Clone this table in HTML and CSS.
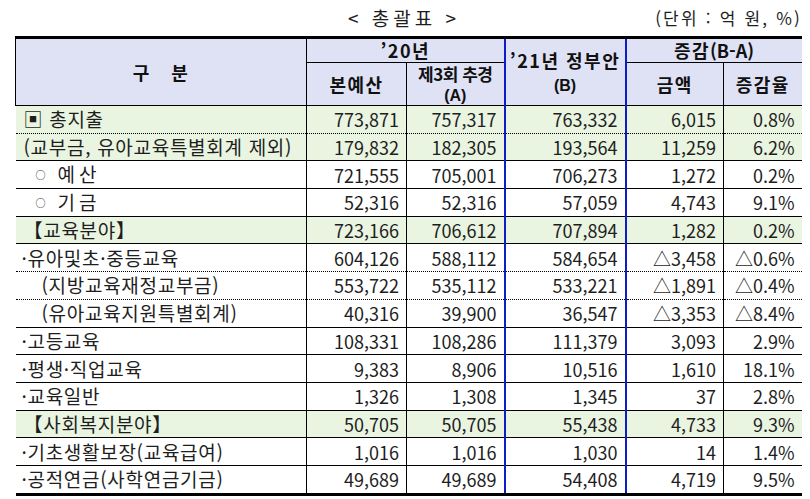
FILE: index.html
```html
<!DOCTYPE html>
<html lang="ko">
<head>
<meta charset="utf-8">
<link rel="stylesheet" href="styles.css">
</head>
<body>
<div class="page">
  <div class="caption">
    <div class="title">&lt; 총괄표 &gt;</div>
    <div class="unit">(단위 : 억 원, %)</div>
  </div>
  <table class="summary">
    <colgroup>
      <col class="c-name"><col class="c-num1"><col class="c-num2"><col class="c-gov"><col class="c-amt"><col class="c-rate">
    </colgroup>
    <thead>
      <tr class="h1">
        <th rowspan="2" class="first"><span class="gubun">구 분</span></th>
        <th colspan="2">’20년</th>
        <th rowspan="2" class="b"><span class="l1">’21년 정부안</span><span class="l2 wide">(B)</span></th>
        <th colspan="2" class="last">증감<span class="paren">(B-A)</span></th>
      </tr>
      <tr class="h2">
        <th>본예산</th>
        <th class="tight"><span class="l1">제3회 추경</span><span class="l2">(A)</span></th>
        <th>금액</th>
        <th class="last">증감율</th>
      </tr>
    </thead>
    <tbody>
      <tr class="green dot"><td class="first">▣ 총지출</td><td>773,871</td><td>757,317</td><td class="b">763,332</td><td>6,015</td><td class="last">0.8%</td></tr>
      <tr class="green"><td class="first">(교부금, 유아교육특별회계 제외)</td><td>179,832</td><td>182,305</td><td class="b">193,564</td><td>11,259</td><td class="last">6.2%</td></tr>
      <tr><td class="first sub"><span class="ring">○</span><span class="sp">예산</span></td><td>721,555</td><td>705,001</td><td class="b">706,273</td><td>1,272</td><td class="last">0.2%</td></tr>
      <tr><td class="first sub"><span class="ring">○</span><span class="sp">기금</span></td><td>52,316</td><td>52,316</td><td class="b">57,059</td><td>4,743</td><td class="last">9.1%</td></tr>
      <tr class="green"><td class="first">【교육분야】</td><td>723,166</td><td>706,612</td><td class="b">707,894</td><td>1,282</td><td class="last">0.2%</td></tr>
      <tr class="dot"><td class="first mid">·유아및초·중등교육</td><td>604,126</td><td>588,112</td><td class="b">584,654</td><td>△3,458</td><td class="last">△0.6%</td></tr>
      <tr class="dot"><td class="first deep">(지방교육재정교부금)</td><td>553,722</td><td>535,112</td><td class="b">533,221</td><td>△1,891</td><td class="last">△0.4%</td></tr>
      <tr><td class="first deep">(유아교육지원특별회계)</td><td>40,316</td><td>39,900</td><td class="b">36,547</td><td>△3,353</td><td class="last">△8.4%</td></tr>
      <tr><td class="first mid">·고등교육</td><td>108,331</td><td>108,286</td><td class="b">111,379</td><td>3,093</td><td class="last">2.9%</td></tr>
      <tr><td class="first mid">·평생·직업교육</td><td>9,383</td><td>8,906</td><td class="b">10,516</td><td>1,610</td><td class="last">18.1%</td></tr>
      <tr><td class="first mid">·교육일반</td><td>1,326</td><td>1,308</td><td class="b">1,345</td><td>37</td><td class="last">2.8%</td></tr>
      <tr class="green"><td class="first">【사회복지분야】</td><td>50,705</td><td>50,705</td><td class="b">55,438</td><td>4,733</td><td class="last">9.3%</td></tr>
      <tr><td class="first mid">·기초생활보장(교육급여)</td><td>1,016</td><td>1,016</td><td class="b">1,030</td><td>14</td><td class="last">1.4%</td></tr>
      <tr class="end"><td class="first mid">·공적연금(사학연금기금)</td><td>49,689</td><td>49,689</td><td class="b">54,408</td><td>4,719</td><td class="last">9.5%</td></tr>
    </tbody>
  </table>
</div>
</body>
</html>
```

FILE: styles.css
```css
html, body {
  margin: 0;
  padding: 0;
  background: #ffffff;
}
body {
  font-family: "Noto Sans CJK KR", "Malgun Gothic", sans-serif;
  color: #1e1e1e;
}
.page {
  width: 786px;
  padding-left: 15px;
}
.caption {
  position: relative;
  height: 36px;
  display: flex;
  align-items: center;
  justify-content: center;
}
.title {
  font-size: 19px;
  letter-spacing: 4px;
  line-height: 36px;
  padding-right: 8px;
}
.unit {
  position: absolute;
  right: -1px;
  top: 0;
  font-size: 17px;
  letter-spacing: 2.2px;
  line-height: 36px;
}
.summary {
  width: 786px;
  border-collapse: collapse;
  table-layout: fixed;
  border-top: 3px solid #000;
  border-bottom: 3px solid #000;
}
.c-name { width: 291px; }
.c-num1 { width: 100px; }
.c-num2 { width: 98px; }
.c-gov { width: 121px; }
.c-amt { width: 98px; }
.c-rate { width: 78px; }

.summary th {
  background: #dfe2f5;
  font-weight: bold;
  font-size: 18px;
  line-height: 21px;
  letter-spacing: 1.5px;
  text-align: center;
  padding: 0;
  border: 1px solid #000;
  color: #111;
}
.summary tr.h1 th { height: 23px; border-top: none; }
.summary tr.h2 th { height: 42px; }
.summary th.tight { letter-spacing: -0.5px; font-size: 17px; }
.l1 {
  display: block;
  line-height: 20px;
}
.l2 {
  display: block;
  margin-top: 3px;
  font-family: "Liberation Sans", Arial, sans-serif;
  font-size: 16px;
  line-height: 18px;
  letter-spacing: 0;
}
.summary th.b .l1 { line-height: 22px; }
.l2.wide { margin-top: 6px; }
.paren { letter-spacing: 0; }
.gubun { word-spacing: 14px; }

.summary td {
  height: 26.7px;
  padding: 0 7px 0 0;
  font-size: 18px;
  line-height: 20px;
  text-align: right;
  border-left: 1px solid #000;
  border-right: 1px solid #000;
  border-bottom: 1px solid #000;
  white-space: nowrap;
}
.summary td.first {
  border-left: none;
  text-align: left;
  padding-left: 8px;
  font-size: 19px;
  letter-spacing: 0.7px;
}
.summary th.first { text-align: center; padding-left: 0; }
.summary .last { border-right: none; }
.summary td.sub { padding-left: 20px; }
.ring {
  display: inline-block;
  font-size: 10px;
  width: 22px;
  vertical-align: 3px;
}
.sp { letter-spacing: 4px; }
.summary td.mid { padding-left: 6px; }
.summary td.deep { padding-left: 26px; }
.summary tr.green td { background: #e9f4e1; }
.summary tr.dot td { border-bottom: 1px dotted #000; }
.summary tr.end td { border-bottom: none; }
.summary td.b,
.summary th.b {
  border-left: 2px solid #0c1ec4;
  border-right: 2px solid #0c1ec4;
}
.summary th.b { border-top: 2px solid #0c1ec4; }
```
